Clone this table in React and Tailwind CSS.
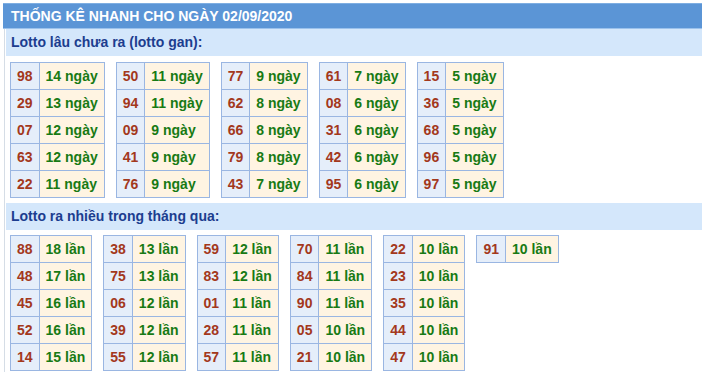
const ganColumns = [
  [['98', '14'], ['29', '13'], ['07', '12'], ['63', '12'], ['22', '11']],
  [['50', '11'], ['94', '11'], ['09', '9'], ['41', '9'], ['76', '9']],
  [['77', '9'], ['62', '8'], ['66', '8'], ['79', '8'], ['43', '7']],
  [['61', '7'], ['08', '6'], ['31', '6'], ['42', '6'], ['95', '6']],
  [['15', '5'], ['36', '5'], ['68', '5'], ['96', '5'], ['97', '5']],
]

const hotColumns = [
  [['88', '18'], ['48', '17'], ['45', '16'], ['52', '16'], ['14', '15']],
  [['38', '13'], ['75', '13'], ['06', '12'], ['39', '12'], ['55', '12']],
  [['59', '12'], ['83', '12'], ['01', '11'], ['28', '11'], ['57', '11']],
  [['70', '11'], ['84', '11'], ['90', '11'], ['05', '10'], ['21', '10']],
  [['22', '10'], ['23', '10'], ['35', '10'], ['44', '10'], ['47', '10']],
  [['91', '10']],
]

const StatTable = ({ rows, unit }) => (
  <table className="border-collapse self-start">
    <tbody>
      {rows.map(([num, count]) => (
        <tr key={num} className="h-[27px]">
          <td className="border border-[#9ab6e2] bg-[#e5eefa] px-[6px] text-[#a3381c]">{num}</td>
          <td className="border border-[#9ab6e2] bg-[#fff4e2] px-[6px] text-[#187a14]">
            {count} {unit}
          </td>
        </tr>
      ))}
    </tbody>
  </table>
)

const SectionTitle = ({ children }) => (
  <div className="h-[27px] bg-[#d4e7fb] pl-[5px] flex items-center text-[14px] font-bold text-[#1c3d8f]">
    {children}
  </div>
)

export default function App() {
  return (
    <div className="bg-white w-[702px] h-[372px] overflow-hidden pt-[3px] pl-[3px] font-['Liberation_Sans',Arial,sans-serif]">
      <div className="h-[26px] bg-[#5b95d6] border-t border-[#7eaee2] border-b border-b-[#9cc2ec] pl-[8px] flex items-center text-[14px] font-bold text-white">
        THỐNG KÊ NHANH CHO NGÀY 02/09/2020
      </div>
      <div className="ml-[1px] border-l border-[#d5dde6] pl-[1px] pb-[10px]">
        <SectionTitle>Lotto lâu chưa ra (lotto gan):</SectionTitle>
        <div className="flex gap-[11px] pl-[4px] pt-[6px] pb-[5px] text-[14px] font-bold">
          {ganColumns.map((rows, i) => (
            <StatTable key={i} rows={rows} unit="ngày" />
          ))}
        </div>
        <SectionTitle>Lotto ra nhiều trong tháng qua:</SectionTitle>
        <div className="flex gap-[11px] pl-[4px] pt-[5px] text-[14px] font-bold">
          {hotColumns.map((rows, i) => (
            <StatTable key={i} rows={rows} unit="lần" />
          ))}
        </div>
      </div>
    </div>
  )
}
